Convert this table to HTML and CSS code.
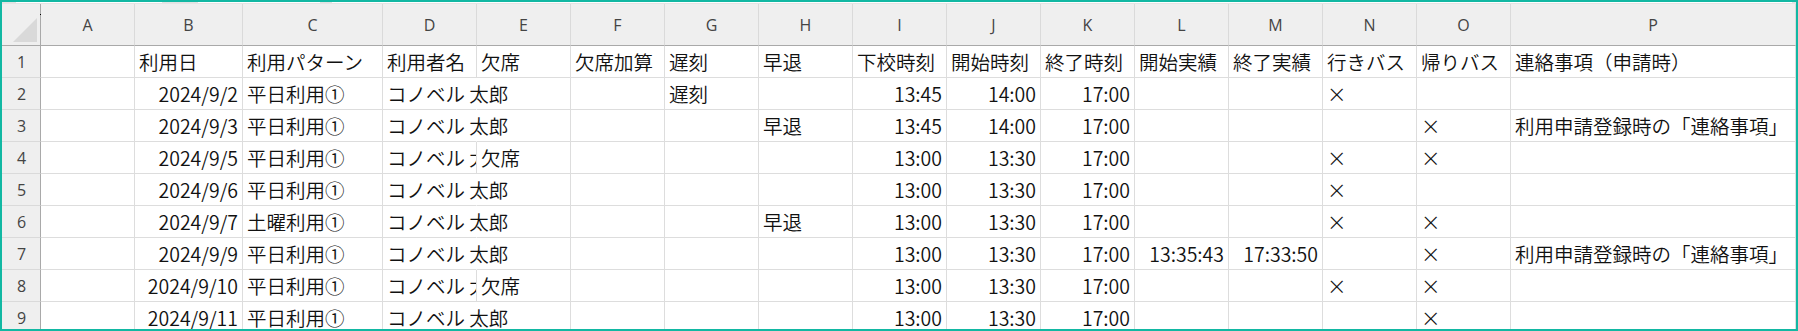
FILE: index.html
```html
<!DOCTYPE html>
<html lang="ja">
<head>
<meta charset="utf-8">
<link rel="stylesheet" href="styles.css">
</head>
<body>
<div class="frame">
  <div class="strip"><span class="box b1"></span><span class="box b2"></span><span class="box b3"></span></div>
  <div class="sheet">
    <div class="corner"><span class="dot"></span><span class="tri"></span></div>
    <div class="ch">A</div><div class="ch">B</div><div class="ch">C</div><div class="ch">D</div><div class="ch">E</div><div class="ch">F</div><div class="ch">G</div><div class="ch">H</div><div class="ch">I</div><div class="ch">J</div><div class="ch">K</div><div class="ch">L</div><div class="ch">M</div><div class="ch">N</div><div class="ch">O</div><div class="ch">P</div>

    <div class="rh">1</div>
    <div class="c"></div><div class="c">利用日</div><div class="c">利用パターン</div><div class="c">利用者名</div><div class="c">欠席</div><div class="c">欠席加算</div><div class="c">遅刻</div><div class="c">早退</div><div class="c">下校時刻</div><div class="c">開始時刻</div><div class="c">終了時刻</div><div class="c">開始実績</div><div class="c">終了実績</div><div class="c">行きバス</div><div class="c">帰りバス</div><div class="c">連絡事項（申請時）</div>

    <div class="rh">2</div>
    <div class="c"></div><div class="c r">2024/9/2</div><div class="c">平日利用①</div><div class="c spill">コノベル 太郎</div><div class="c"></div><div class="c"></div><div class="c">遅刻</div><div class="c"></div><div class="c r">13:45</div><div class="c r">14:00</div><div class="c r">17:00</div><div class="c"></div><div class="c"></div><div class="c">×</div><div class="c"></div><div class="c"></div>

    <div class="rh">3</div>
    <div class="c"></div><div class="c r">2024/9/3</div><div class="c">平日利用①</div><div class="c spill">コノベル 太郎</div><div class="c"></div><div class="c"></div><div class="c"></div><div class="c">早退</div><div class="c r">13:45</div><div class="c r">14:00</div><div class="c r">17:00</div><div class="c"></div><div class="c"></div><div class="c"></div><div class="c">×</div><div class="c">利用申請登録時の「連絡事項」</div>

    <div class="rh">4</div>
    <div class="c"></div><div class="c r">2024/9/5</div><div class="c">平日利用①</div><div class="c clip">コノベル 太郎</div><div class="c">欠席</div><div class="c"></div><div class="c"></div><div class="c"></div><div class="c r">13:00</div><div class="c r">13:30</div><div class="c r">17:00</div><div class="c"></div><div class="c"></div><div class="c">×</div><div class="c">×</div><div class="c"></div>

    <div class="rh">5</div>
    <div class="c"></div><div class="c r">2024/9/6</div><div class="c">平日利用①</div><div class="c spill">コノベル 太郎</div><div class="c"></div><div class="c"></div><div class="c"></div><div class="c"></div><div class="c r">13:00</div><div class="c r">13:30</div><div class="c r">17:00</div><div class="c"></div><div class="c"></div><div class="c">×</div><div class="c"></div><div class="c"></div>

    <div class="rh">6</div>
    <div class="c"></div><div class="c r">2024/9/7</div><div class="c">土曜利用①</div><div class="c spill">コノベル 太郎</div><div class="c"></div><div class="c"></div><div class="c"></div><div class="c">早退</div><div class="c r">13:00</div><div class="c r">13:30</div><div class="c r">17:00</div><div class="c"></div><div class="c"></div><div class="c">×</div><div class="c">×</div><div class="c"></div>

    <div class="rh">7</div>
    <div class="c"></div><div class="c r">2024/9/9</div><div class="c">平日利用①</div><div class="c spill">コノベル 太郎</div><div class="c"></div><div class="c"></div><div class="c"></div><div class="c"></div><div class="c r">13:00</div><div class="c r">13:30</div><div class="c r">17:00</div><div class="c r">13:35:43</div><div class="c r">17:33:50</div><div class="c"></div><div class="c">×</div><div class="c">利用申請登録時の「連絡事項」</div>

    <div class="rh">8</div>
    <div class="c"></div><div class="c r">2024/9/10</div><div class="c">平日利用①</div><div class="c clip">コノベル 太郎</div><div class="c">欠席</div><div class="c"></div><div class="c"></div><div class="c"></div><div class="c r">13:00</div><div class="c r">13:30</div><div class="c r">17:00</div><div class="c"></div><div class="c"></div><div class="c">×</div><div class="c">×</div><div class="c"></div>

    <div class="rh">9</div>
    <div class="c"></div><div class="c r">2024/9/11</div><div class="c">平日利用①</div><div class="c spill">コノベル 太郎</div><div class="c"></div><div class="c"></div><div class="c"></div><div class="c"></div><div class="c r">13:00</div><div class="c r">13:30</div><div class="c r">17:00</div><div class="c"></div><div class="c"></div><div class="c"></div><div class="c">×</div><div class="c"></div>
  </div>
</div>
</body>
</html>
```

FILE: styles.css
```css
html, body {
  margin: 0;
  padding: 0;
  background: #ffffff;
}
.frame {
  width: 1798px;
  height: 331px;
  box-sizing: border-box;
  border: 2px solid #12b8a3;
  overflow: hidden;
  background: #ffffff;
}
.strip {
  height: 2px;
  background: #e4e4e4;
  display: flex;
}
.strip .box {
  height: 1px;
  background: #ffffff;
}
.strip .b1 { margin-left: 14px; width: 146px; }
.strip .b2 { margin-left: 36px; width: 122px; }
.strip .b3 { margin-left: 12px; width: 1460px; }
.sheet {
  display: grid;
  grid-template-columns: 39px 94px 108px 140px repeat(12, 94px) 285px;
  grid-template-rows: 42px;
  grid-auto-rows: 32px;
}
.corner {
  background: #efefef;
  border-right: 1px solid #a9a9a9;
  border-bottom: 1px solid #a9a9a9;
  box-sizing: border-box;
  position: relative;
}
.corner .tri {
  position: absolute;
  left: 11px;
  top: 14px;
  width: 0;
  height: 0;
  border-left: 24px solid transparent;
  border-bottom: 24px solid #d9d9d9;
}
.corner .dot {
  position: absolute;
  right: -1px;
  top: 10px;
  width: 1px;
  height: 1px;
  background: #000;
}
.ch {
  background: #efefef;
  border-right: 1px solid #dadada;
  border-bottom: 1px solid #a9a9a9;
  box-sizing: border-box;
  display: flex;
  align-items: center;
  justify-content: center;
  font-family: "Open Sans", "Noto Sans", sans-serif;
  font-size: 16px;
  color: #444444;
  padding-top: 1px;
}
.rh {
  background: #efefef;
  border-right: 1px solid #a9a9a9;
  border-bottom: 1px solid #dadada;
  box-sizing: border-box;
  display: flex;
  align-items: center;
  justify-content: center;
  font-family: "Open Sans", "Noto Sans", sans-serif;
  font-size: 16px;
  color: #444444;
  padding-left: 1px;
}
.c {
  border-right: 1px solid #dddddd;
  border-bottom: 1px solid #dddddd;
  box-sizing: border-box;
  display: flex;
  align-items: center;
  padding: 0 4px 0 4px;
  font-family: "Noto Sans CJK JP", "Noto Sans", sans-serif;
  font-size: 19.5px;
  font-weight: 350;
  line-height: 1;
  color: #111111;
  white-space: nowrap;
  overflow: hidden;
}
.c.r {
  justify-content: flex-end;
}
.c.spill {
  overflow: visible;
  border-right-color: transparent;
}
.c.clip {
  overflow: hidden;
}
```
